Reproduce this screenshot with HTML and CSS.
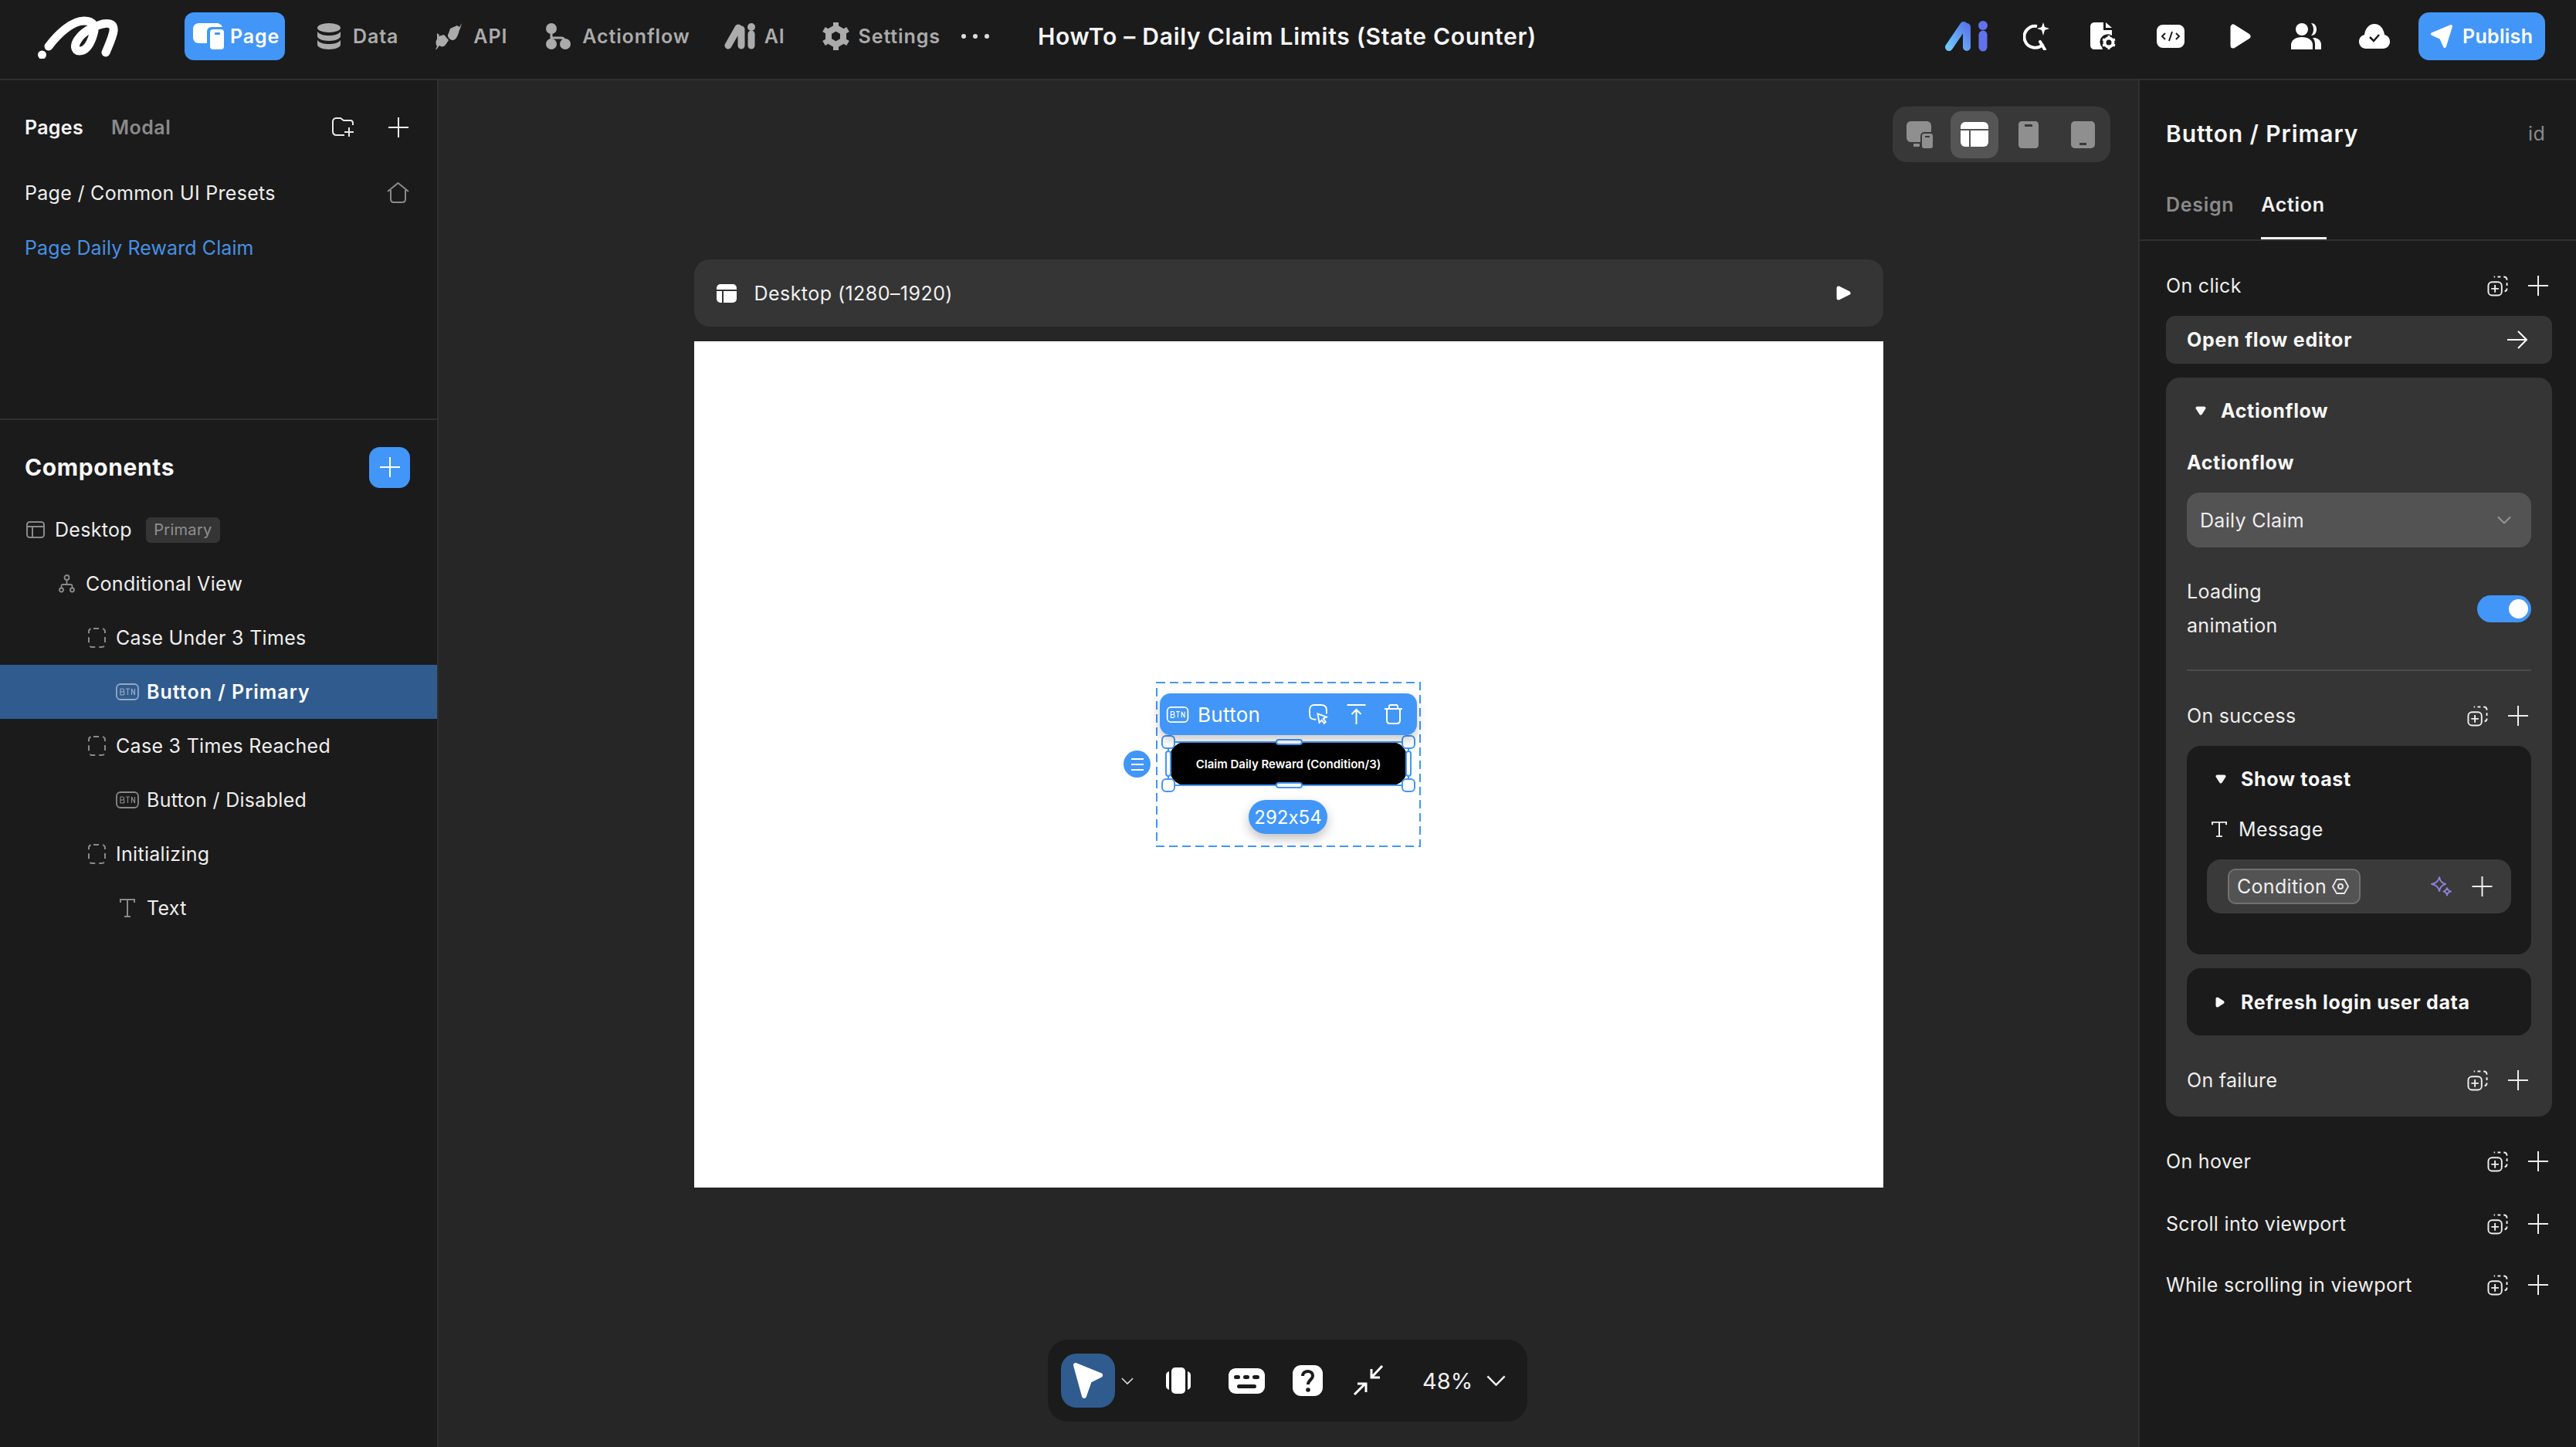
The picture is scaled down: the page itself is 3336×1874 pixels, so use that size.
FILE: index.html
```html
<!DOCTYPE html>
<html lang="en">
<head>
<meta charset="utf-8">
<title>HowTo - Daily Claim Limits (State Counter)</title>
<link rel="stylesheet" href="styles.css">
</head>
<body>
<svg class="sprite" aria-hidden="true">
  <symbol id="plus" viewBox="0 0 26 26"><path d="M13 0v26M0 13h26" fill="none" stroke="currentColor" stroke-width="2"/></symbol>
  <symbol id="copyplus" viewBox="0 0 28 28"><g fill="none" stroke="currentColor" stroke-width="2"><path d="M9 1.500h1.500M14 1.500h4M22 1.500c3 0 4.500 1.500 4.500 4.500M26.500 9.500v4M26.500 17c0 2-1 3.500-3 4" /><rect x="1.500" y="8.500" width="18" height="18" rx="5"/><path d="M10.500 12.500v10M5.500 17.500h10"/></g></symbol>
  <symbol id="dashbox" viewBox="0 0 23 26"><rect x="1" y="1" width="21" height="24" rx="4" fill="none" stroke="currentColor" stroke-width="2" stroke-dasharray="7 5" stroke-dashoffset="-2"/></symbol>
  <symbol id="btn" viewBox="0 0 30 22"><rect x="1" y="1" width="28" height="20" rx="5" fill="none" stroke="currentColor" stroke-width="1.800"/><path d="M6 7h2.600a1.800 1.800 0 0 1 0 4H6zm0 4h3a2 2 0 0 1 0 4H6zM13 7h5M15.500 7v8M20.500 15V7l4 8V7" fill="none" stroke="currentColor" stroke-width="1.200"/></symbol>
  <symbol id="ticon" viewBox="0 0 20 24"><path d="M1 5V1h18v4M10 1v22M6 23h8" fill="none" stroke="currentColor" stroke-width="2"/></symbol>
  <symbol id="tridown" viewBox="0 0 14 12"><path d="M2.500 2.500h9L7 9.500z" fill="currentColor" stroke="currentColor" stroke-width="4" stroke-linejoin="round"/></symbol>
  <symbol id="triright" viewBox="0 0 12 14"><path d="M2.500 2.500v9l7-4.500z" fill="currentColor" stroke="currentColor" stroke-width="4" stroke-linejoin="round"/></symbol>
  <symbol id="chev" viewBox="0 0 18 10"><path d="M1 1l8 8 8-8" fill="none" stroke="currentColor" stroke-width="1.800"/></symbol>
</svg>
<div class="app">
  <header class="top">
    <svg class="logo" viewBox="0 0 104 56"><path d="M14 40C26 24 44 7 60 7 72 7 75 14 72 24 68 38 62 46 54 46 47 46 47 38 52 31 58 22 70 15 84 11 94 9 99 12 98 20 97 28 92 38 88 48" fill="none" stroke="#fff" stroke-width="11" stroke-linecap="round" stroke-linejoin="round"/><circle cx="5.500" cy="51" r="5.500" fill="#fff"/></svg>
    <nav class="nav">
      <a class="nav-item active">
        <svg class="ni" width="40" height="34" viewBox="0 0 40 34"><path d="M8 0h22c4 0 7 2 8 5H24c-4 0-6 3-6 6v15H8c-5 0-8-3-8-8V8c0-5 3-8 8-8z" fill="#fff"/><rect x="22" y="8" width="18" height="26" rx="4" fill="#fff"/><rect x="28" y="12" width="7" height="3" rx="1" fill="#4296f7"/></svg>
        <span>Page</span>
      </a>
      <a class="nav-item">
        <svg width="32" height="34" viewBox="0 0 32 34" fill="#ababab"><ellipse cx="16" cy="6" rx="15" ry="6"/><path d="M1 11c3 4 9 5 15 5s12-1 15-5v6c0 3-7 6-15 6S1 20 1 17z"/><path d="M1 22c3 4 9 5 15 5s12-1 15-5v6c0 3-7 6-15 6S1 31 1 28z"/></svg>
        <span>Data</span>
      </a>
      <a class="nav-item item-api">
        <svg width="35" height="34" viewBox="0 0 35 34" fill="#ababab"><path d="M20 7l-2 6c-2 3-1 5 1 7l1 1c3 2 6 1 8-2 3-4 3-9 5-12l2-7-3 5-3-2zM3 13l3 2-1 2 7-2 6 7-4 6c-2 3-6 3-8 1l-3 4-3 3 3-6c-2-3-2-7 0-9z"/></svg>
        <span>API</span>
      </a>
      <a class="nav-item">
        <svg width="33" height="34" viewBox="0 0 33 34"><g fill="#ababab"><circle cx="8" cy="7" r="7"/><circle cx="8" cy="27" r="7"/><circle cx="26" cy="27" r="7"/></g><path d="M8 10v18M8 19h13c4 0 5 3 5 8" fill="none" stroke="#ababab" stroke-width="3"/></svg>
        <span>Actionflow</span>
      </a>
      <a class="nav-item tight item-ai">
        <svg width="41" height="34" viewBox="0 0 41 34"><path d="M5 29L18 6M22 8v21M35 14v15" fill="none" stroke="#ababab" stroke-width="9" stroke-linecap="round"/><circle cx="35" cy="5" r="5" fill="#ababab"/></svg>
        <span>AI</span>
      </a>
      <a class="nav-item tight item-set">
        <svg width="37" height="38" viewBox="0 0 37 38"><path d="M18.500 8l9.500 5.500v11L18.500 30 9 24.500v-11z" fill="none" stroke="#ababab" stroke-width="8" stroke-linejoin="round"/><path d="M18.500 1v6M18.500 31v6M3 10l5 3M29 25l5 3M3 28l5-3M29 13l5-3" stroke="#ababab" stroke-width="7"/></svg>
        <span>Settings</span>
      </a>
      <div class="dots"><i></i><i></i><i></i></div>
    </nav>
    <h1 class="title">HowTo – Daily Claim Limits (State Counter)</h1>
    <div class="tools">
      <svg class="t-ai" width="55" height="40" viewBox="0 0 55 40"><defs><linearGradient id="aig" x1="0" y1="1" x2="1" y2="0"><stop offset="0" stop-color="#6cc6fa"/><stop offset="1" stop-color="#5a78ea"/></linearGradient></defs><path d="M5 34L24 6M28 8v26" fill="none" stroke="url(#aig)" stroke-width="10" stroke-linecap="round"/><path d="M49 18v16" stroke="#6272ea" stroke-width="11" stroke-linecap="round"/><circle cx="49" cy="6" r="6" fill="#6272ea"/></svg>
      <svg class="t-search" width="34" height="36" viewBox="0 0 34 36"><path d="M18 5A14 14 0 1 0 26 28" fill="none" stroke="#fff" stroke-width="4"/><path d="M22 25l6 10" stroke="#fff" stroke-width="4" stroke-linecap="round"/><path d="M26 0l2 6 6 2-6 2-2 7-2-7-6-2 6-2z" fill="#fff"/></svg>
      <svg class="t-file" width="34" height="36" viewBox="0 0 34 36"><path d="M6 0h11v10h11v7a10 10 0 0 0-13 15l1 3H6c-4 0-6-2-6-6V6c0-4 2-6 6-6z" fill="#fff"/><path d="M20 0l8 7h-8z" fill="#fff"/><circle cx="24" cy="26" r="5.500" fill="none" stroke="#fff" stroke-width="4"/><path d="M24 17v3M24 32v3M16 22l3 1M29 29l3 1M16 30l3-1M29 23l3-1" stroke="#fff" stroke-width="3"/></svg>
      <svg class="t-code" width="36" height="30" viewBox="0 0 36 30"><rect width="36" height="30" rx="8" fill="#fff"/><path d="M11 11l-4 4 4 4M25 11l4 4-4 4M20 9l-4 12" fill="none" stroke="#1b1b1b" stroke-width="2"/></svg>
      <svg class="t-play" width="27" height="32" viewBox="0 0 27 32"><path d="M4 4v24l19-12z" fill="#fff" stroke="#fff" stroke-width="7" stroke-linejoin="round"/></svg>
      <svg class="t-users" width="39" height="34" viewBox="0 0 39 34" fill="#fff"><circle cx="14" cy="8" r="8"/><path d="M0 34v-6c0-6 6-10 14-10s14 4 14 10v6z"/><path d="M26 0c5 0 7 4 7 8s-2 8-7 8c2-2 3-5 3-8s-1-6-3-8zM31 19c5 1 8 4 8 9v6h-8v-7c0-3-1-6-3-8z"/></svg>
      <svg class="t-cloud" width="40" height="32" viewBox="0 0 40 32"><path d="M9 32c-5 0-9-4-9-9s3-8 7-9C8 6 13 0 20 0s12 6 13 14c4 1 7 4 7 9s-4 9-9 9z" fill="#fff"/><path d="M14 17l5 5 7-8" fill="none" stroke="#1b1b1b" stroke-width="2.500"/></svg>
      <button class="publish">
        <svg width="30" height="32" viewBox="0 0 30 32"><path d="M3 13L27 3l-8 26-5-11z" fill="#fff" stroke="#fff" stroke-width="4" stroke-linejoin="round"/></svg>
        <span>Publish</span>
      </button>
    </div>
  </header>

  <div class="main">
    <aside class="left">
      <section class="pages">
        <div class="pages-head">
          <span class="tab-on">Pages</span>
          <span class="tab-off">Modal</span>
          <svg class="push" width="28" height="26" viewBox="0 0 28 26"><path d="M16 23H6c-3 0-5-2-5-5V5c0-2 2-4 4-4h6l4 3h9c2 0 3 2 3 4v2" fill="none" stroke="#e8e8e8" stroke-width="2"/><path d="M22 13v12M16 19h12" stroke="#e8e8e8" stroke-width="2"/></svg>
          <svg class="ic26" width="26" height="26"><use href="#plus"/></svg>
        </div>
        <div class="page-row"><span>Page / Common UI Presets</span>
          <svg class="push" width="29" height="27" viewBox="0 0 29 27"><path d="M1 12L14.500 1 28 12M5 10v12c0 3 2 4 4 4h11c2 0 4-1 4-4V10" fill="none" stroke="#8a8a8a" stroke-width="2"/></svg>
        </div>
        <div class="page-row current"><span>Page Daily Reward Claim</span></div>
      </section>
      <section class="comps">
        <div class="comps-head">
          <span>Components</span>
          <button class="add"><svg width="26" height="26"><use href="#plus"/></svg></button>
        </div>
        <div class="tree-row l0">
          <svg class="ti" width="24" height="22" viewBox="0 0 24 22"><rect x="1" y="1" width="22" height="20" rx="3.500" fill="none" stroke="#8a8a8a" stroke-width="2"/><path d="M1 7h22M8 7v14" stroke="#8a8a8a" stroke-width="2"/></svg>
          <span>Desktop</span><em class="badge">Primary</em>
        </div>
        <div class="tree-row l1">
          <svg class="ti" width="21" height="24" viewBox="0 0 21 24"><g fill="none" stroke="#8a8a8a" stroke-width="1.800"><circle cx="10.500" cy="4" r="3"/><circle cx="3.500" cy="20" r="2.500"/><circle cx="17.500" cy="20" r="2.500"/><path d="M10.500 7v6M3.500 17v-2c0-1 1-2 2-2h10c1 0 2 1 2 2v2"/></g></svg>
          <span>Conditional View</span>
        </div>
        <div class="tree-row l2"><svg class="ti" width="23" height="26"><use href="#dashbox"/></svg><span>Case Under 3 Times</span></div>
        <div class="tree-row l3 selected"><svg class="ti" width="30" height="22"><use href="#btn"/></svg><span>Button / Primary</span></div>
        <div class="tree-row l2"><svg class="ti" width="23" height="26"><use href="#dashbox"/></svg><span>Case 3 Times Reached</span></div>
        <div class="tree-row l3"><svg class="ti" width="30" height="22"><use href="#btn"/></svg><span>Button / Disabled</span></div>
        <div class="tree-row l2"><svg class="ti" width="23" height="26"><use href="#dashbox"/></svg><span>Initializing</span></div>
        <div class="tree-row l3"><div class="ti tbox"><svg width="20" height="24"><use href="#ticon"/></svg></div><span>Text</span></div>
      </section>
    </aside>

    <main class="canvas">
      <div class="devices">
        <div class="dev">
          <svg width="34" height="35" viewBox="0 0 34 35" fill="#8f8f8f"><path d="M6 0h20c3 0 6 2 6 6v8h-8c-4 0-6 2-6 6v7H6c-3 0-6-2-6-6V6c0-4 3-6 6-6z"/><rect x="20" y="16" width="14" height="19" rx="3"/><rect x="9" y="29" width="8" height="4" rx="1"/><rect x="24" y="19" width="6" height="2" fill="#383838"/></svg>
        </div>
        <div class="dev on">
          <svg width="36" height="32" viewBox="0 0 36 32"><rect width="36" height="32" rx="6" fill="#fff"/><path d="M0 10h36M12 10v22" stroke="#555" stroke-width="2"/></svg>
        </div>
        <div class="dev">
          <svg width="26" height="35" viewBox="0 0 26 35" fill="#8f8f8f"><path d="M4 0h18c2 0 4 2 4 4v27c0 2-2 4-4 4H4c-2 0-4-2-4-4V4c0-2 2-4 4-4z"/><rect x="8" y="4" width="10" height="3" fill="#383838"/></svg>
        </div>
        <div class="dev">
          <svg width="31" height="35" viewBox="0 0 31 35" fill="#8f8f8f"><rect width="31" height="35" rx="5"/><rect x="11" y="28" width="9" height="3" fill="#383838"/></svg>
        </div>
      </div>

      <div class="viewport-bar">
        <svg width="26" height="24" viewBox="0 0 26 24"><rect width="26" height="24" rx="5" fill="#fff"/><path d="M0 8h26M8 8v16" stroke="#353535" stroke-width="2"/></svg>
        <span>Desktop (1280–1920)</span>
        <svg class="push" width="23" height="23" viewBox="0 0 23 23"><path d="M5 5v13l13-6.500z" fill="#fff" stroke="#fff" stroke-width="5" stroke-linejoin="round"/></svg>
      </div>

      <div class="artboard">
        <div class="claim-wrap">
          <button class="claim">Claim Daily Reward (Condition/3)</button>
          <div class="selection">
            <div class="handle h-tl"></div><div class="handle h-tr"></div><div class="handle h-bl"></div><div class="handle h-br"></div>
            <div class="bar-h h-t"></div><div class="bar-h h-b"></div><div class="bar-v h-l"></div><div class="bar-v h-r"></div>
          </div>
          <svg class="dashed" width="343" height="214"><rect x="1" y="1" width="341" height="212" fill="none" stroke="#4296f7" stroke-width="2" stroke-dasharray="11 6"/></svg>
          <div class="el-bar">
            <svg width="30" height="21"><use href="#btn"/></svg>
            <span>Button</span>
            <svg class="push" width="27" height="27" viewBox="0 0 24 26"><g fill="none" stroke="#fff" stroke-width="1.800"><path d="M9 19H7c-4 0-6-2-6-6V7c0-4 2-6 6-6h8c4 0 7 2 7 6v5"/><path d="M11 12l11 4-4 2 3 4-2 2-3-4-3 3z" fill="#4296f7"/></g></svg>
            <svg class="gap1" width="25" height="26" viewBox="0 0 24 26"><path d="M0 1h24M12 8v18M6 13l6-6 6 6" fill="none" stroke="#fff" stroke-width="2"/></svg>
            <svg class="gap2" width="25" height="26" viewBox="0 0 23 26"><path d="M0 6h23M6 6V3c0-1 1-2 2-2h7c1 0 2 1 2 2v3M3 6v15c0 3 2 4 4 4h9c2 0 4-1 4-4V6" fill="none" stroke="#fff" stroke-width="2"/></svg>
          </div>
          <div class="grab"><i></i><i></i><i></i></div>
          <div class="size-pill">292x54</div>
        </div>
      </div>

      <div class="dock">
        <button class="pointer"><svg width="40" height="48" viewBox="0 0 40 48"><path d="M4 4l32 13-14 7-7 20z" fill="#fff" stroke="#fff" stroke-width="6" stroke-linejoin="round"/></svg></button>
        <svg class="dchev" width="16" height="9"><use href="#chev"/></svg>
        <svg class="d1" width="32" height="34" viewBox="0 0 32 34" fill="#fff"><rect x="7" y="0" width="18" height="34" rx="5"/><path d="M4 5v24C1 28 0 26 0 24V10c0-2 1-4 4-5zM28 5v24c3-1 4-3 4-5V10c0-2-1-4-4-5z"/></svg>
        <svg class="d2" width="47" height="33" viewBox="0 0 47 33"><rect width="47" height="33" rx="9" fill="#fff"/><g fill="#1b1b1b"><rect x="7" y="9" width="8" height="5" rx="2.500"/><rect x="19" y="9" width="8" height="5" rx="2.500"/><rect x="31" y="9" width="9" height="5" rx="2.500"/><rect x="11" y="21" width="25" height="5" rx="2.500"/></g></svg>
        <svg class="d3" width="39" height="40" viewBox="0 0 39 40"><rect width="39" height="40" rx="11" fill="#fff"/><path d="M13 14c0-4 3-6 7-6s6 3 6 6c0 5-6 5-6 11" fill="none" stroke="#1b1b1b" stroke-width="4"/><circle cx="20" cy="32" r="2.800" fill="#1b1b1b"/></svg>
        <svg class="d4" width="40" height="40" viewBox="0 0 40 40"><path d="M38 1L25 15M24 5v11h11M2 38l14-14M6 24h11v11" fill="none" stroke="#fff" stroke-width="3"/></svg>
        <span class="zoom">48%</span>
        <svg class="zchev" width="25" height="14" viewBox="0 0 18 10"><use href="#chev"/></svg>
      </div>
    </main>

    <aside class="right">
      <div class="r-head"><strong>Button / Primary</strong><span>id</span></div>
      <div class="r-tabs"><span class="off">Design</span><span class="on">Action</span></div>
      <div class="r-body">
        <div class="act-row first"><span>On click</span><svg class="push" width="27" height="27"><use href="#copyplus"/></svg><svg class="plus" width="26" height="26"><use href="#plus"/></svg></div>
        <div class="flow-btn"><span>Open flow editor</span><svg width="26" height="24" viewBox="0 0 26 24"><path d="M0 12h24M14 1l11 11-11 11" fill="none" stroke="#fff" stroke-width="2"/></svg></div>
        <div class="card">
          <div class="collapse"><svg width="14" height="12"><use href="#tridown"/></svg><span>Actionflow</span></div>
          <div class="label">Actionflow</div>
          <div class="select"><span>Daily Claim</span><svg class="sel-chev" width="18" height="13" viewBox="0 0 18 10"><use href="#chev"/></svg></div>
          <div class="toggle-row"><span>Loading<br>animation</span><div class="toggle"><i></i></div></div>
          <hr class="rule">
          <div class="act-row success"><span>On success</span><svg class="push" width="27" height="27"><use href="#copyplus"/></svg><svg class="plus" width="26" height="26"><use href="#plus"/></svg></div>
          <div class="dark toast">
            <div class="collapse"><svg width="14" height="12"><use href="#tridown"/></svg><span>Show toast</span></div>
            <div class="msg"><svg width="20" height="20" viewBox="0 0 20 24" preserveAspectRatio="none"><use href="#ticon"/></svg><span>Message</span></div>
            <div class="input">
              <div class="chip"><span>Condition</span><svg width="22" height="22" viewBox="0 0 22 22"><path d="M6 2h10l5 9-5 9H6l-5-9z" fill="none" stroke="#e8e8e8" stroke-width="1.800" stroke-linejoin="round"/><circle cx="11" cy="11" r="3" fill="none" stroke="#e8e8e8" stroke-width="2"/></svg></div>
              <svg class="push" width="27" height="26" viewBox="0 0 27 26"><g fill="none" stroke="#8f7fd6" stroke-width="1.800" stroke-linejoin="round"><path d="M11 1c1 5 3 8 8 9-5 1-7 4-8 9-1-5-4-8-10-9 6-1 9-4 10-9z"/><path d="M21 15c.5 2 2 3.500 5 4.500-3 .5-4.500 2-5 5-.5-3-2-4.500-4.500-5 2.500-1 4-2.500 4.500-4.500z"/></g></svg>
              <svg class="plus" width="27" height="26"><use href="#plus"/></svg>
            </div>
          </div>
          <div class="dark refresh"><svg width="12" height="14"><use href="#triright"/></svg><span>Refresh login user data</span></div>
          <div class="act-row success"><span>On failure</span><svg class="push" width="27" height="27"><use href="#copyplus"/></svg><svg class="plus" width="26" height="26"><use href="#plus"/></svg></div>
        </div>
        <div class="act-row hover"><span>On hover</span><svg class="push" width="27" height="27"><use href="#copyplus"/></svg><svg class="plus" width="26" height="26"><use href="#plus"/></svg></div>
        <div class="act-row scroll"><span>Scroll into viewport</span><svg class="push" width="27" height="27"><use href="#copyplus"/></svg><svg class="plus" width="26" height="26"><use href="#plus"/></svg></div>
        <div class="act-row while"><span>While scrolling in viewport</span><svg class="push" width="27" height="27"><use href="#copyplus"/></svg><svg class="plus" width="26" height="26"><use href="#plus"/></svg></div>
      </div>
    </aside>
  </div>
</div>
</body>
</html>
```

FILE: styles.css
```css
* { box-sizing: border-box; }
html, body { margin: 0; padding: 0; background: #1b1b1b; }
body { font-family: "Inter", "Noto Sans", sans-serif; color: #f2f2f2; font-size: 25px; letter-spacing: .3px; font-feature-settings: "calt" 0; }
svg { display: block; flex: none; }
.sprite { position: absolute; width: 0; height: 0; }
button { font: inherit; letter-spacing: inherit; border: 0; color: inherit; padding: 0; }
.push { margin-left: auto; }

.app { width: 3336px; height: 1874px; display: flex; flex-direction: column; overflow: hidden; }

/* top bar */
.top { flex: none; height: 104px; border-bottom: 2px solid #303030; background: #1b1b1b; display: flex; align-items: center; padding-right: 40px; position: relative; }
.logo { width: 104px; height: 56px; margin-left: 49px; margin-top: -6px; }
.nav { display: flex; align-items: center; margin-left: 86px; gap: 49px; margin-top: -8px; }
.nav-item { display: flex; align-items: center; gap: 15px; color: #ababab; font-weight: 600; font-size: 25px; letter-spacing: .9px; }
.nav-item.tight { gap: 11px; }
.item-api { margin-left: -2px; }
.item-ai { margin-left: -5px; }
.item-set { margin-left: -2px; }
.nav-item.active { width: 130px; height: 62px; margin-right: -8px; border-radius: 12px; background: #4296f7; color: #fff; padding-left: 11px; gap: 8px; }
.dots { display: flex; gap: 9px; margin-left: -22px; }
.dots i { width: 6px; height: 6px; border-radius: 50%; background: #ddd; }
.title { margin: -8px 0 0 63px; font-size: 30px; font-weight: 600; color: #f5f5f5; letter-spacing: .72px; white-space: nowrap; }
.tools { margin-left: auto; margin-top: -8px; display: flex; align-items: center; }
.t-search { margin-left: 46px; } .t-file { margin-left: 53px; } .t-code { margin-left: 52px; }
.t-play { margin-left: 59px; } .t-users { margin-left: 52px; } .t-cloud { margin-left: 49px; }
.publish { width: 164px; height: 62px; margin-left: 37px; border-radius: 14px; background: #4296f7; color: #fff; font-weight: 600; font-size: 25px; display: flex; align-items: center; gap: 12px; padding-left: 15px; }

.main { flex: 1; display: grid; grid-template-columns: 568px 2201px 567px; min-height: 0; }

/* left panel */
.left { background: #1b1b1b; border-right: 2px solid #303030; display: flex; flex-direction: column; }
.pages { height: 440px; border-bottom: 2px solid #303030; }
.pages-head { height: 110px; padding: 12px 37px 0 32px; display: flex; align-items: center; font-weight: 600; }
.tab-on { color: #f5f5f5; }
.tab-off { color: #8a8a8a; margin-left: 36px; letter-spacing: .5px; }
.ic26 { margin-left: 45px; }
.page-row { height: 71px; padding: 0 36px 0 32px; display: flex; align-items: center; color: #eee; }
.page-row.current { color: #4790e4; letter-spacing: .1px; }
.comps-head { height: 107px; padding: 15px 35px 0 32px; display: flex; align-items: center; justify-content: space-between; font-size: 30px; font-weight: 700; letter-spacing: .6px; color: #f7f7f7; }
.add { width: 53px; height: 53px; border-radius: 14px; background: #4296f7; color: #fff; display: flex; align-items: center; justify-content: center; }
.tree-row { height: 70px; display: flex; align-items: center; color: #eee; }
.tree-row .ti { color: #8a8a8a; }
.l0 { padding-left: 34px; gap: 13px; }
.l1 { padding-left: 76px; gap: 14px; }
.l2 { padding-left: 114px; gap: 13px; }
.l3 { padding-left: 150px; gap: 10px; }
.tbox { width: 30px; display: flex; justify-content: center; }
.badge { font-style: normal; margin-left: 5px; height: 33px; width: 96px; border-radius: 6px; background: #353535; color: #8f8f8f; font-size: 20px; display: flex; align-items: center; justify-content: center; }
.selected { background: #2f5b8f; color: #fff; font-weight: 600; letter-spacing: 1px; }
.selected .ti { color: #98a9bf; }

/* canvas */
.canvas { background: #262626; position: relative; padding-top: 232px; display: flex; flex-direction: column; align-items: center; }
.devices { position: absolute; left: 1883px; top: 34px; width: 282px; height: 72px; border-radius: 18px; background: #383838; display: flex; align-items: center; padding-left: 18px; }
.dev { flex: none; display: flex; align-items: center; justify-content: center; margin-right: 42px; }
.dev.on { width: 62px; height: 61px; border-radius: 14px; background: #555; margin-left: -19px; margin-right: 26px; }
.viewport-bar { flex: none; width: 1540px; height: 87px; border-radius: 20px; background: #353535; display: flex; align-items: center; padding: 0 40px 0 29px; gap: 23px; letter-spacing: .45px; color: #f0f0f0; }
.artboard { flex: none; margin-top: 19px; width: 1540px; height: 1096px; background: #fff; display: flex; align-items: center; justify-content: center; }
.claim-wrap { position: relative; width: 307px; height: 56px; margin-top: -2px; }
.claim { width: 307px; height: 56px; border-radius: 20px; background: #000; color: #fff; font-size: 15px; font-weight: 600; letter-spacing: 0; white-space: nowrap; display: block; }
.selection { position: absolute; inset: -1px -3px; border: 2px solid #4296f7; }
.handle { position: absolute; width: 18px; height: 18px; border-radius: 6px; background: #fff; border: 2px solid #4296f7; }
.h-tl { left: -10px; top: -10px; } .h-tr { right: -10px; top: -10px; }
.h-bl { left: -10px; bottom: -10px; } .h-br { right: -10px; bottom: -10px; }
.bar-h { position: absolute; left: 50%; margin-left: -17px; width: 35px; height: 8px; border-radius: 4px; background: #fff; border: 2px solid #4296f7; }
.h-t { top: -5px; } .h-b { bottom: -5px; }
.bar-v { position: absolute; top: 50%; margin-top: -17px; width: 8px; height: 34px; border-radius: 4px; background: #fff; border: 2px solid #4296f7; }
.h-l { left: -5px; } .h-r { right: -5px; }
.dashed { position: absolute; left: -18px; top: -78px; pointer-events: none; }
.el-bar { position: absolute; left: -13px; top: -63px; width: 333px; height: 54px; border-radius: 14px; background: #4296f7; color: #fff; display: flex; align-items: center; padding: 0 18px 0 8px; gap: 11px; box-shadow: 0 6px 14px rgba(0,0,0,.22); }
.el-bar span { font-size: 26px; font-weight: 400; }
.gap1 { margin-left: 12px; }
.gap2 { margin-left: 12px; }
.grab { position: absolute; left: -60px; top: 11px; width: 35px; height: 35px; border-radius: 50%; background: #4296f7; display: flex; flex-direction: column; align-items: center; justify-content: center; gap: 5px; }
.grab i { width: 16px; height: 2px; background: #fff; }
.size-pill { position: absolute; left: 102px; top: 75px; width: 102px; height: 44px; border-radius: 22px; background: #4296f7; color: #fff; font-size: 24px; letter-spacing: 0; display: flex; align-items: center; justify-content: center; box-shadow: 0 6px 14px rgba(0,0,0,.25); }
.dock { position: absolute; left: 789px; top: 1631px; width: 621px; height: 106px; border-radius: 26px; background: #1b1b1b; display: flex; align-items: center; padding-left: 17px; }
.pointer { width: 70px; height: 70px; border-radius: 20px; background: #2f5b8f; display: flex; align-items: center; justify-content: center; }
.dchev { margin-left: 8px; color: #ddd; }
.d1 { margin-left: 42px; } .d2 { margin-left: 49px; } .d3 { margin-left: 36px; } .d4 { margin-left: 39px; }
.zoom { margin-left: 50px; font-size: 29px; letter-spacing: 0; color: #f0f0f0; width: 62px; }
.zchev { margin-left: 21px; color: #f0f0f0; }

/* right panel */
.right { background: #1b1b1b; border-left: 2px solid #303030; display: flex; flex-direction: column; }
.r-head { flex: none; height: 138px; padding: 0 40px 0 34px; display: flex; align-items: center; justify-content: space-between; }
.r-head strong { font-size: 30px; font-weight: 600; letter-spacing: .9px; color: #f7f7f7; }
.r-head span { color: #8a8a8a; font-size: 25px; }
.r-tabs { flex: none; height: 70px; border-bottom: 2px solid #303030; padding-left: 34px; display: flex; gap: 35px; font-weight: 600; letter-spacing: .7px; }
.r-tabs span { height: 68px; padding-top: 8px; line-height: 30px; }
.r-tabs .off { color: #8a8a8a; }
.r-tabs .on { color: #f2f2f2; border-bottom: 3px solid #f2f2f2; width: 85px; }
.r-body { padding: 0 31px 0 34px; }
.act-row { display: flex; align-items: center; height: 60px; color: #eee; }
.act-row .plus { margin-left: 26px; }
.act-row svg { color: #eee; }
.act-row.first { margin-top: 28px; padding-right: 5px; }
.act-row.success { margin-top: 28px; padding-right: 4px; }
.act-row.hover { margin-top: 28px; padding-right: 5px; }
.act-row.scroll { margin-top: 21px; padding-right: 5px; }
.act-row.while { margin-top: 19px; padding-right: 5px; }
.flow-btn { margin-top: 9px; height: 62px; border-radius: 12px; background: #353535; display: flex; align-items: center; justify-content: space-between; padding: 0 32px 0 27px; font-weight: 700; letter-spacing: .75px; color: #f7f7f7; }
.card { margin-top: 18px; border-radius: 18px; background: #353535; padding: 22px 27px 17px 27px; }
.collapse { height: 42px; display: flex; align-items: center; gap: 19px; padding-left: 11px; font-weight: 700; letter-spacing: .65px; color: #f7f7f7; }
.label { margin-top: 25px; height: 42px; line-height: 42px; font-weight: 700; letter-spacing: .65px; color: #f7f7f7; }
.select { margin-top: 18px; height: 71px; border-radius: 16px; background: #535353; display: flex; align-items: center; justify-content: space-between; padding: 0 26px 0 17px; color: #eee; }
.sel-chev { color: #9a9a9a; }
.toggle-row { margin-top: 35px; display: flex; align-items: center; justify-content: space-between; line-height: 44px; color: #eee; }
.toggle { width: 70px; height: 35px; border-radius: 18px; background: #4296f7; position: relative; }
.toggle i { position: absolute; right: 4px; top: 5px; width: 25px; height: 25px; border-radius: 50%; background: #fff; }
.rule { margin: 35px 0 0; border: 0; height: 2px; background: #4c4c4c; }
.dark { border-radius: 18px; background: #1b1b1b; }
.act-row.success + .dark { margin-top: 9px; }
.toast { height: 270px; padding: 22px 26px 0 26px; }
.toast .collapse { padding-left: 11px; gap: 19px; }
.msg { margin-top: 24px; height: 40px; display: flex; align-items: center; gap: 15px; padding-left: 6px; color: #eee; }
.input { margin-top: 19px; height: 70px; border-radius: 18px; background: #3a3a3a; display: flex; align-items: center; padding: 0 24px 0 27px; }
.input .plus { margin-left: 26px; color: #eee; }
.chip { width: 172px; height: 46px; border: 2px solid #717171; border-radius: 10px; background: #535353; display: flex; align-items: center; padding-left: 10px; gap: 7px; color: #eee; }
.refresh { margin-top: 18px; height: 87px; display: flex; align-items: center; padding-left: 37px; gap: 21px; font-weight: 700; letter-spacing: .65px; color: #f7f7f7; }
```
